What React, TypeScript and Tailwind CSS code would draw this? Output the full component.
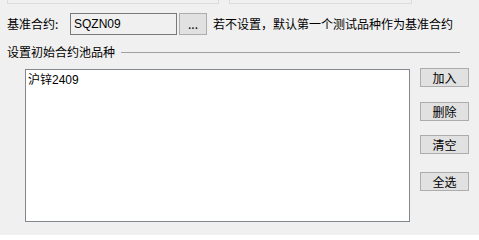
import React from "react"

const font = { fontFamily: '"Noto Sans CJK SC", "Liberation Sans", sans-serif' }

function WinButton({ label, className = "" }: { label: string; className?: string }) {
  return (
    <button
      className={`flex items-center justify-center bg-[#e1e1e1] border border-[#adadad] text-[12px] leading-none text-black ${className}`}
    >
      {label}
    </button>
  )
}

export default function App() {
  return (
    <div className="w-[479px] h-[235px] bg-[#f0f0f0] overflow-hidden text-[12px] text-black" style={font}>
      {/* remnants of panels above */}
      <div className="flex pl-[7px] gap-[10px]">
        <div className="w-[212px] h-[4px] border-x border-b border-[#dcdcdc]" />
        <div className="w-[183px] h-[4px] border-x border-b border-[#dcdcdc]" />
      </div>

      {/* base contract row */}
      <div className="flex items-center mt-[9px] h-[22px]">
        <span className="ml-[7px] w-[63px] leading-none">基准合约:</span>
        <div className="w-[107px] h-[22px] border border-[#7a7a7a] bg-[#f0f0f0] flex items-center pl-[3px] leading-none" style={{ fontFamily: '"Liberation Sans", "Noto Sans CJK SC", sans-serif' }}>
          SQZN09
        </div>
        <WinButton label="..." className="ml-[2px] w-[28px] h-[22px]" />
        <span className="ml-[6px] leading-none">若不设置，默认第一个测试品种作为基准合约</span>
      </div>

      {/* group title */}
      <div className="flex items-center mt-[10px] h-[14px] pl-[7px] pr-[19px]">
        <span className="leading-none">设置初始合约池品种</span>
        <div className="flex-1 ml-[6px] h-[1px] bg-[#a0a0a0]" />
      </div>

      {/* list and buttons */}
      <div className="flex mt-[10px] pl-[25px]">
        <div className="w-[385px] h-[153px] bg-white border border-[#828790] px-[2px] pt-[2px]">
          <div className="leading-[14px]">
            沪锌<span style={{ fontFamily: '"Liberation Sans", sans-serif' }}>2409</span>
          </div>
        </div>
        <div className="flex flex-col ml-[10px] mt-[-1px]">
          <WinButton label="加入" className="w-[49px] h-[19px]" />
          <WinButton label="删除" className="w-[49px] h-[19px] mt-[15px]" />
          <WinButton label="清空" className="w-[49px] h-[19px] mt-[14px]" />
          <WinButton label="全选" className="w-[49px] h-[19px] mt-[18px]" />
        </div>
      </div>
    </div>
  )
}
